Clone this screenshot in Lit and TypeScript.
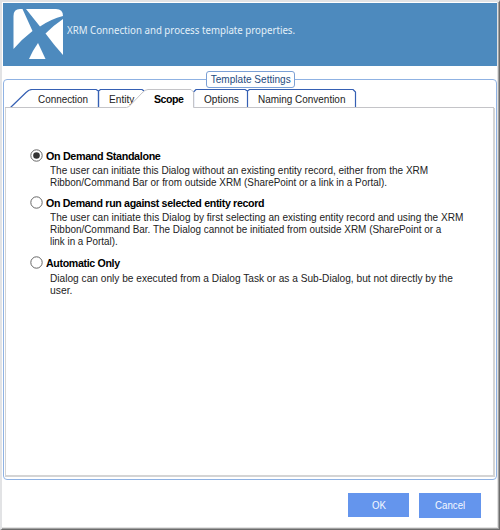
import { LitElement, html, svg, css } from "lit";
import { customElement, property, state } from "lit/decorators.js";

interface ScopeOption {
  title: string;
  titleScale: number;
  lines: { text: string; scale: number }[];
}

const OPTIONS: ScopeOption[] = [
  {
    title: "On Demand Standalone",
    titleScale: 0.978,
    lines: [
      { text: "The user can initiate this Dialog without an existing entity record, either from the XRM", scale: 0.911 },
      { text: "Ribbon/Command Bar or from outside XRM (SharePoint or a link in a Portal).", scale: 0.899 },
    ],
  },
  {
    title: "On Demand run against selected entity record",
    titleScale: 0.968,
    lines: [
      { text: "The user can initiate this Dialog by first selecting an existing entity record and using the XRM", scale: 0.916 },
      { text: "Ribbon/Command Bar. The Dialog cannot be initiated from outside XRM (SharePoint or a", scale: 0.902 },
      { text: "link in a Portal).", scale: 0.893 },
    ],
  },
  {
    title: "Automatic Only",
    titleScale: 0.965,
    lines: [
      { text: "Dialog can only be executed from a Dialog Task or as a Sub-Dialog, but not directly by the", scale: 0.922 },
      { text: "user.", scale: 0.94 },
    ],
  },
];

@customElement("dialog-header")
class DialogHeader extends LitElement {
  static styles = css`
    :host {
      display: flex;
      height: 63px;
      background: #4d8abe;
      color: #e4f0f8;
      font: 11px/14px "Noto Sans", sans-serif;
    }
    .logo { width: 50px; height: 50px; margin: 6px 0 0 10px; flex: none; }
    .caption { margin: 20px 0 0 4px; white-space: nowrap; transform: scaleX(0.881); transform-origin: 0 0; }
  `;
  render() {
    return html`
      <svg class="logo" viewBox="0 0 50 50" fill="#fff">
        <path d="M7 0H9.500L19.500 22Q9 30 0.500 40V7Q0.500 0 7 0Z" />
        <path d="M13 0H43Q50 0 50 7Q38 10 27 17.500Z" />
        <path d="M50 10V46Q41 36 32.500 24.500Q41 16 50 10Z" />
        <path d="M25 34L32.500 50H16Q20 41 25 34Z" />
      </svg>
      <span class="caption">XRM Connection and process template properties.</span>
    `;
  }
}

@customElement("tab-strip")
class TabStrip extends LitElement {
  static styles = css`
    :host {
      display: flex;
      position: relative;
      height: 19px;
      font: 11px/13px "Liberation Sans", Arial, sans-serif;
      color: #222;
    }
    .shape { position: absolute; left: 0; top: 0; width: 489px; height: 20px; }
    .tab { position: relative; box-sizing: border-box; padding-top: 4px; white-space: nowrap; }
    .label { display: inline-block; transform-origin: 0 0; }
    .connection { width: 93px; padding-left: 33px; }
    .connection .label { transform: scaleX(0.9); }
    .entity { width: 45px; padding-left: 11px; }
    .entity .label { transform: scaleX(0.92); }
    .scope { width: 50px; padding-left: 11px; font-weight: bold; color: #000; letter-spacing: -0.5px; }
    .scope .label { transform: scaleX(0.96); }
    .options { width: 55px; padding-left: 11px; }
    .options .label { transform: scaleX(0.92); }
    .naming { padding-left: 10px; }
    .naming .label { transform: scaleX(0.905); }
    .front { z-index: 1; }
  `;
  render() {
    return html`
      <svg class="shape" viewBox="0 0 489 20" fill="none" stroke="#3560b4" stroke-width="1.200">
        <path d="M5.500 18.500L21 3.500Q24 .5 27 .5H91L93.500 2V18" />
        <path d="M93.500 18V2L95.500 .5H137L139 2" />
        <path d="M188.500 18V3L191 .5H240L242.500 2V18M242.500 2L244.500 .5H348L350.500 3V18" />
      </svg>
      <span class="tab connection"><span class="label">Connection</span></span>
      <span class="tab entity"><span class="label">Entity</span></span>
      <svg class="shape" viewBox="0 0 489 20">
        <path fill="#fff" d="M122.500 19L137 4.500Q140 1 143 1H186L188 3V19Z" />
        <path fill="none" stroke="#c4c4c8" d="M0 18.500H121.500Q124 18 126 15.500L137 4Q140 .5 143 .5H186L188.500 3V18.500H489" />
      </svg>
      <span class="tab scope front"><span class="label">Scope</span></span>
      <span class="tab options front"><span class="label">Options</span></span>
      <span class="tab naming front"><span class="label">Naming Convention</span></span>
    `;
  }
}

@customElement("scope-option")
class ScopeOptionRow extends LitElement {
  @property({ attribute: false }) option!: ScopeOption;
  @property({ type: Boolean }) checked = false;
  static styles = css`
    :host { display: block; color: #222; font: 11px/12px "Liberation Sans", Arial, sans-serif; }
    .head { display: flex; align-items: center; height: 13px; gap: 3px; }
    .radio { width: 13px; height: 13px; flex: none; }
    .title { font-weight: bold; color: #000; white-space: nowrap; letter-spacing: -0.35px; transform-origin: 0 0; }
    .body { padding: 2px 0 0 20px; }
    .line { display: block; width: max-content; white-space: nowrap; transform-origin: 0 0; }
  `;
  render() {
    const o = this.option;
    return html`
      <div class="head">
        <svg class="radio" viewBox="0 0 13 13">
          <circle cx="6.500" cy="6.500" r="5.700" fill="#fff" stroke="#666" />
          ${this.checked ? svg`<circle cx="6.500" cy="6.500" r="3.300" fill="#333" />` : null}
        </svg>
        <span class="title" style="transform:scaleX(${o.titleScale})">${o.title}</span>
      </div>
      <div class="body" part="body">
        ${o.lines.map((l) => html`<span class="line" style="transform:scaleX(${l.scale})">${l.text}</span>`)}
      </div>
    `;
  }
}

@customElement("app-root")
class AppRoot extends LitElement {
  @state() private selected = 0;
  static styles = css`
    :host {
      display: flex;
      flex-direction: column;
      box-sizing: border-box;
      width: 500px;
      height: 530px;
      overflow: hidden;
      background: #fff;
      border-style: solid;
      border-width: 2px 1px 1px 2px;
      border-color: #e2e3e5 #6c6c6c #6c6c6c #e2e3e5;
      box-shadow: inset -1px -1px #a2a2a2, inset -2px -2px #e3e3e3;
      font: 11px/13px "Liberation Sans", Arial, sans-serif;
    }
    dialog-header { margin: 1px 2px 0 1px; flex: none; }
    .group {
      position: relative;
      box-sizing: border-box;
      height: 401px;
      margin: 13px 2px 0 1px;
      border: 1px solid #8fb2e3;
      border-radius: 4px;
      padding: 9px 1px 2px 1px;
      display: flex;
      flex-direction: column;
    }
    .legend {
      position: absolute;
      left: 202px;
      top: -9px;
      box-sizing: border-box;
      width: 89px;
      height: 17px;
      border: 1px solid #7ba0d5;
      border-radius: 3px;
      background: #fff;
      color: #244b80;
      display: flex;
      justify-content: center;
      line-height: 14px;
      white-space: nowrap;
    }
    .legend-text { transform: scaleX(0.915); }
    .page {
      flex: 1;
      box-sizing: border-box;
      border: solid #d4d4d4;
      border-width: 0 2px 2px 1px;
      padding: 41px 0 0 24px;
    }
    .page scope-option:nth-child(1) { height: 47px; }
    .page scope-option:nth-child(2) { height: 60px; }
    .page scope-option:nth-child(3)::part(body) { padding-top: 3px; }
    .actions { display: flex; justify-content: flex-end; gap: 10px; padding: 13px 18px 0 0; }
    .button {
      display: flex;
      align-items: center;
      justify-content: center;
      box-sizing: border-box;
      border: 0;
      padding: 0;
      width: 61px;
      height: 24px;
      background: #6495ed;
      color: #f4f8ff;
      font: 11px/23px "Liberation Sans", Arial, sans-serif;
    }
    .button-text { transform: scaleX(0.88); }
    .cancel { width: 62px; height: 25px; }
  `;
  render() {
    return html`
      <dialog-header></dialog-header>
      <section class="group">
        <span class="legend"><span class="legend-text">Template Settings</span></span>
        <tab-strip></tab-strip>
        <div class="page">
          ${OPTIONS.map(
            (o, i) => html`<scope-option
              .option=${o}
              ?checked=${i === this.selected}
              @click=${() => (this.selected = i)}
            ></scope-option>`
          )}
        </div>
      </section>
      <div class="actions">
        <button class="button"><span class="button-text">OK</span></button>
        <button class="button cancel"><span class="button-text">Cancel</span></button>
      </div>
    `;
  }
}
